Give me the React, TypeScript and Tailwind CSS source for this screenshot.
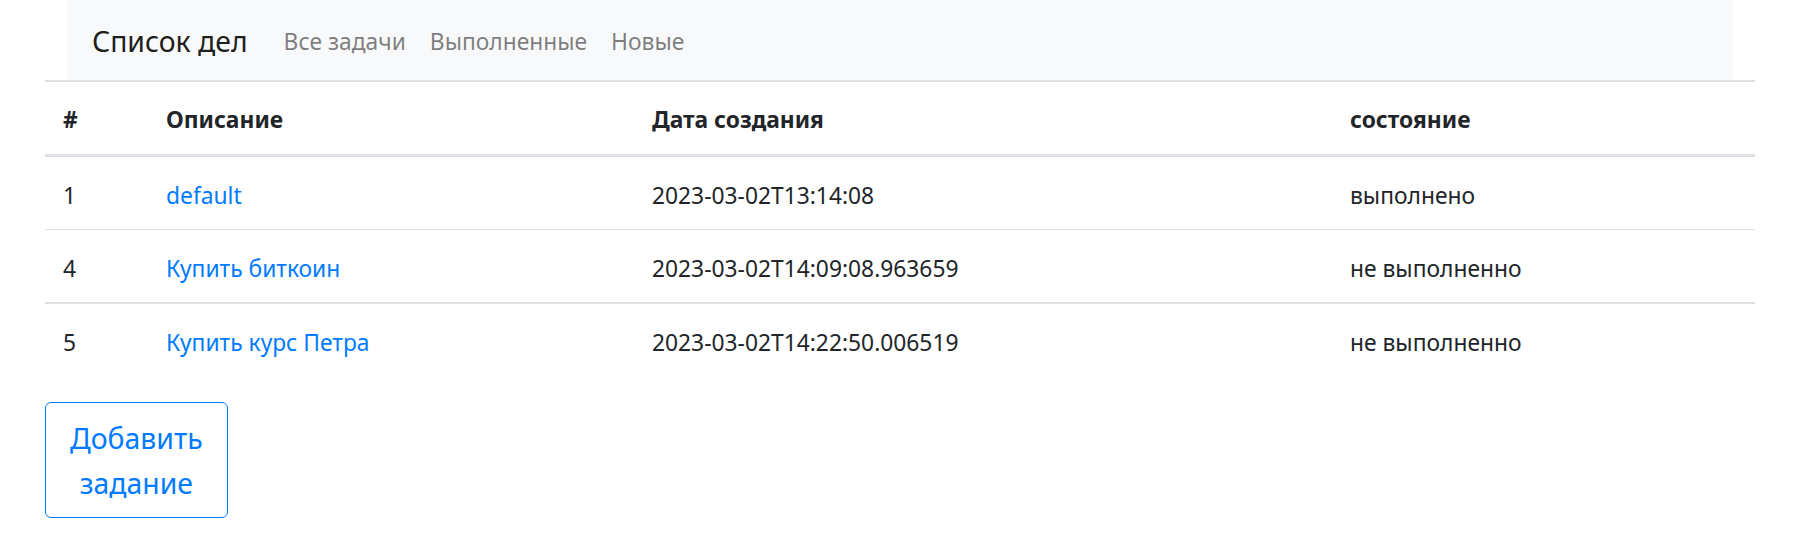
import React from "react";

type Task = {
    id: number;
    title: string;      // task description (rendered as link)
    created: string;    // ISO timestamp as returned by backend
    done: boolean;
};

const tasks: Task[] = [
    { id: 1, title: "default", created: "2023-03-02T13:14:08", done: true },
    { id: 4, title: "Купить биткоин", created: "2023-03-02T14:09:08.963659", done: false },
    { id: 5, title: "Купить курс Петра", created: "2023-03-02T14:22:50.006519", done: false },
];

const navLinks = ["Все задачи", "Выполненные", "Новые"];

export default function App() {
    return (
        <div className="min-h-screen bg-white font-['Noto_Sans',sans-serif] text-[22.8px] leading-[36px] text-[#212529]">
            <div className="pl-[45px] pr-[39px]">
                {/* Navbar */}
                <nav className="mx-[22px] flex h-[80px] items-center bg-[#f8f9fa] px-[25px] pt-[3px]">
                    <a href="#" className="mr-[24px] text-[28.4px] leading-[45px] text-black/90">
                        Список дел
                    </a>
                    <ul className="flex">
                        {navLinks.map((l) => (
                            <li key={l}>
                                <a href="#" className="block px-[12px] text-black/50">
                                    {l}
                                </a>
                            </li>
                        ))}
                    </ul>
                </nav>

                {/* Task table */}
                <table className="mb-[26px] w-full table-fixed border-collapse">
                    <colgroup>
                        <col className="w-[103px]" />
                        <col className="w-[486px]" />
                        <col className="w-[698px]" />
                        <col />
                    </colgroup>
                    <thead>
                        <tr className="border-t-2 border-b-[3px] border-[#dee2e6] text-left">
                            <th className="px-[18px] pt-[20px] pb-[16px] font-bold">#</th>
                            <th className="px-[18px] pt-[20px] pb-[16px] font-bold">Описание</th>
                            <th className="px-[18px] pt-[20px] pb-[16px] font-bold">Дата создания</th>
                            <th className="px-[18px] pt-[20px] pb-[16px] font-bold">состояние</th>
                        </tr>
                    </thead>
                    <tbody>
                        {tasks.map((t, i) => (
                            <tr
                                key={t.id}
                                className={i === 0 ? "" : i === 1 ? "border-t border-[#dee2e6]" : "border-t-2 border-[#dee2e6]"}
                            >
                                <td className="px-[18px] pt-[21px] pb-[15px]">{t.id}</td>
                                <td className="px-[18px] pt-[21px] pb-[15px]">
                                    <a href="#" className="text-[#007bff]">
                                        {t.title}
                                    </a>
                                </td>
                                <td className="px-[18px] pt-[21px] pb-[15px]">{t.created}</td>
                                <td className="px-[18px] pt-[21px] pb-[15px]">
                                    {t.done ? "выполнено" : "не выполненно"}
                                </td>
                            </tr>
                        ))}
                    </tbody>
                </table>

                {/* Add button */}
                <button
                    type="button"
                    className="w-min rounded-[6px] border border-[#007bff] px-[24px] pt-[13px] pb-[11px] text-center text-[28.4px] leading-[45px] text-[#007bff]"
                >
                    Добавить задание
                </button>
            </div>
        </div>
    );
}
